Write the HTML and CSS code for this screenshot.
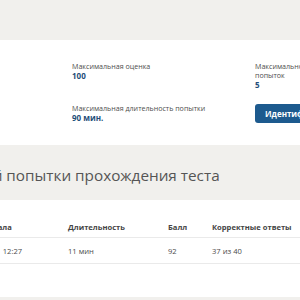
FILE: index.html
```html
<!DOCTYPE html>
<html lang="ru">
<head>
<meta charset="utf-8">
<link rel="stylesheet" href="styles.css">
</head>
<body>
<div class="page">
  <section class="info card">
    <div class="info-grid">
      <div class="field">
        <div class="label">Максимальная оценка</div>
        <div class="value">100</div>
      </div>
      <div class="field narrow">
        <div class="label">Максимальное количество попыток</div>
        <div class="value">5</div>
      </div>
      <div class="field">
        <div class="label">Максимальная длительность попытки</div>
        <div class="value">90 мин.</div>
      </div>
      <div class="field">
        <button class="btn">Идентифицироваться</button>
      </div>
    </div>
  </section>
  <h2 class="heading">Результаты последней попытки прохождения теста</h2>
  <section class="card table-card">
    <div class="table">
      <div class="row head">
        <div>Дата начала</div>
        <div>Длительность</div>
        <div>Балл</div>
        <div>Корректные ответы</div>
      </div>
      <div class="row">
        <div>12.03.2021 12:27</div>
        <div>11 мин</div>
        <div>92</div>
        <div>37 из 40</div>
      </div>
    </div>
  </section>
</div>
</body>
</html>
```
FILE: styles.css
```css
html, body {
  margin: 0;
  padding: 0;
  background: #f1f0ed;
  overflow: hidden;
}
body {
  font-family: "Open Sans", "Noto Sans", sans-serif;
  color: #555;
}
.page {
  padding-top: 40px;
  width: 300px;
}
.card {
  background: #fff;
}
.info {
  height: 105px;
  box-sizing: border-box;
  padding: 22px 0 0 72px;
  overflow: hidden;
}
.info-grid {
  display: grid;
  grid-template-columns: 183px 110px;
  row-gap: 15px;
  width: 400px;
}
.label {
  font-size: 7.1px;
  line-height: 9px;
  color: #4d4d4d;
  white-space: nowrap;
}
.field.narrow .label {
  white-space: normal;
  width: 100px;
}
.value {
  font-size: 8px;
  line-height: 9px;
  font-weight: 700;
  color: #1f4e79;
}
.btn {
  display: block;
  height: 19px;
  padding: 0 10px;
  border: none;
  border-radius: 3px;
  background: #1d5a8e;
  color: #fff;
  font-family: "Open Sans", "Noto Sans", sans-serif;
  font-size: 8px;
  font-weight: 700;
  white-space: nowrap;
}
.heading {
  margin: 0 0 0 -167px;
  height: 55px;
  box-sizing: border-box;
  padding-top: 20px;
  font-size: 15.3px;
  line-height: 20px;
  font-weight: 400;
  color: #555;
  white-space: nowrap;
}
.table-card {
  height: 97px;
  box-sizing: border-box;
  padding-top: 17px;
  overflow: hidden;
}
.table {
  margin-left: -38px;
  width: 400px;
}
.row {
  display: grid;
  grid-template-columns: 106px 100px 44px 150px;
  height: 25px;
  align-items: center;
  border-bottom: 1px solid #eaeaea;
  font-size: 7.6px;
  color: #4d4d4d;
  white-space: nowrap;
}
.row.head {
  height: 20px;
  font-weight: 700;
  color: #444;
}
```
